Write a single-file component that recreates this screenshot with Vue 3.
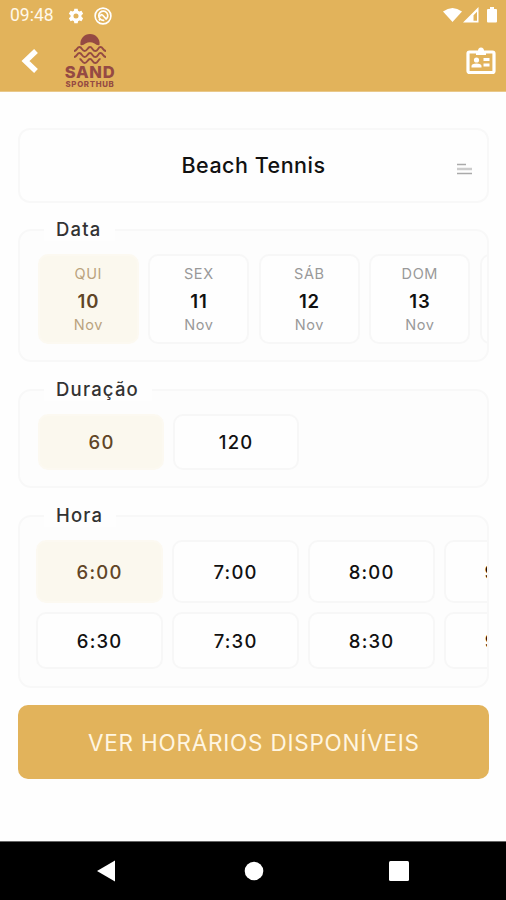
<script setup>
const days = [
  { week: 'QUI', day: '10', month: 'Nov', active: true },
  { week: 'SEX', day: '11', month: 'Nov' },
  { week: 'SÁB', day: '12', month: 'Nov' },
  { week: 'DOM', day: '13', month: 'Nov' },
]
const durations = ['60', '120']
const fullHours = ['6:00', '7:00', '8:00', '9:00']
const halfHours = ['6:30', '7:30', '8:30', '9:30']
</script>

<template>
  <div class="screen">
    <header class="top">
      <div class="status">
        <span class="clock">09:48</span>
        <svg class="gear" width="16" height="16" viewBox="0 0 24 24" fill="#fff">
          <path fill-rule="evenodd" d="M9.500 1h5l.6 3.200 2 1.200 3.100-1.100 2.500 4.300-2.500 2.100v2.600l2.500 2.100-2.500 4.300-3.100-1.100-2 1.200-.6 3.200h-5l-.6-3.200-2-1.200-3.100 1.100-2.500-4.300 2.500-2.100v-2.600L1.300 8.600l2.500-4.300 3.100 1.100 2-1.200zM12 8.200a3.800 3.800 0 1 0 0 7.600 3.800 3.800 0 0 0 0-7.600z" />
        </svg>
        <svg class="ring" width="18" height="18" viewBox="0 0 18 18" fill="none" stroke="#fff">
          <circle cx="9" cy="9" r="7.900" stroke-width="1.600" />
          <path d="M5 13.300L6.200 12A4.500 4.500 0 1 1 12 12.300M6.200 12Q8 13.800 10.300 13.200M8 7.500l4.500 4.800M6.500 9.500Q6.500 7.500 8 7.500" stroke-width="1.700" />
        </svg>
        <svg class="signals" width="56" height="18" viewBox="0 0 56 18">
          <path d="M0 4.500Q9.500-2.500 19 4.500L9.500 15z" fill="#fff" />
          <path fill-rule="evenodd" d="M20 15.500L35.500 0v15.500zM30.500 8.300v5.500h3.500V4.800z" fill="#fff" />
          <path d="M47 0h4v2h2q1 0 1 1v11.500q0 1-1 1h-8q-1 0-1-1V3q0-1 1-1h2z" fill="#fff" />
        </svg>
      </div>
      <div class="bar">
        <svg class="back" width="20" height="26" viewBox="0 0 20 26" fill="none" stroke="#fff" stroke-width="5.500">
          <path d="M16 3L5.500 13 16 23" />
        </svg>
        <div class="brand">
          <svg width="34" height="31" viewBox="0 0 34 31" fill="none" stroke="#954a43">
            <path d="M7.500 12A9.600 9.600 0 1 1 26.500 12Q24 12.600 21.500 10.500Q17 8 12.500 10.500Q10 12.600 7.500 12z" fill="#954a43" stroke="none" />
            <path
              d="M1 18C4 18 4 14 6.500 14S9 18 11.700 18 14.500 14 17 14 19.500 18 22.300 18 25 14 27.500 14 30 18 33 18M1 24C4 24 4 20 6.500 20S9 24 11.700 24 14.500 20 17 20 19.500 24 22.300 24 25 20 27.500 20 30 24 33 24M6.500 26C9 26 9 30 11.700 30S14.500 26 17 26 19.500 30 22.300 30 25 26 27.500 26"
              stroke-width="1.900"
            />
          </svg>
          <b class="sand">SAND</b>
          <b class="hub">SPORTHUB</b>
        </div>
        <svg class="badge" width="30" height="28" viewBox="0 0 30 28">
          <rect x="2" y="5" width="26" height="20.500" rx="1.500" fill="none" stroke="#fff" stroke-width="3.200" />
          <path d="M10 4h2q0-3.500 3-3.500T18 4h2v4H10z" fill="#fff" />
          <circle cx="10.500" cy="13" r="2.600" fill="#fff" />
          <path d="M5.500 20.500v-1.500q0-2.500 5-2.500t5 2.500v1.500zM17.500 11h6v3h-6zM17.500 16.500h6v3h-6z" fill="#fff" />
        </svg>
      </div>
    </header>

    <main>
      <div class="select">
        <span class="sport">Beach Tennis</span>
        <svg class="lines" width="15" height="12" viewBox="0 0 15 12">
          <path d="M0 1.500h9M0 10.500h15" stroke="#aaa" stroke-width="1.500" />
          <path d="M0 6h15" stroke="#ccc" stroke-width="2.500" />
        </svg>
      </div>

      <section class="group dates">
        <h2><span>Data</span></h2>
        <div class="row">
          <div v-for="d in days" :key="d.day" class="card day" :class="{ active: d.active }">
            <span class="small">{{ d.week }}</span>
            <span class="num">{{ d.day }}</span>
            <span class="small month">{{ d.month }}</span>
          </div>
          <div class="card day"></div>
        </div>
      </section>

      <section class="group lengths">
        <h2><span>Duração</span></h2>
        <div class="row">
          <div v-for="(d, i) in durations" :key="d" class="card slot" :class="{ active: i === 0 }">{{ d }}</div>
        </div>
      </section>

      <section class="group hours">
        <h2><span>Hora</span></h2>
        <div class="row full">
          <div v-for="(h, i) in fullHours" :key="h" class="card slot" :class="{ active: i === 0 }">{{ h }}</div>
        </div>
        <div class="row half">
          <div v-for="h in halfHours" :key="h" class="card slot">{{ h }}</div>
        </div>
      </section>

      <button class="cta">VER HORÁRIOS DISPONÍVEIS</button>
    </main>

    <nav>
      <svg width="18" height="22" viewBox="0 0 18 22"><path d="M0 11L18 0.500v21z" fill="#fff" /></svg>
      <svg class="home" width="20" height="20" viewBox="0 0 20 20"><circle cx="10" cy="10" r="9.300" fill="#fff" /></svg>
      <svg width="20" height="20" viewBox="0 0 20 20"><rect width="20" height="20" rx="1.500" fill="#fff" /></svg>
    </nav>
  </div>
</template>

<style>
body { margin: 0; background: #fefefe; }
</style>

<style scoped>
* { box-sizing: border-box; }
.screen {
  width: 506px;
  height: 900px;
  display: flex;
  flex-direction: column;
  background: #fefefe;
  font-family: Inter, "Liberation Sans", sans-serif;
  color: #111;
  overflow: hidden;
}
.top { height: 92px; flex: none; background: #e2b35b; border-bottom: 1px solid #e9c88a; }
.status { height: 31px; display: flex; align-items: center; padding: 0 6px 0 10px; }
.clock { width: 58px; font: 400 17.500px/31px Roboto, sans-serif; color: #fff8ea; }
.ring { margin-left: 10px; }
.signals { margin-left: auto; margin-right: 1px; }
.bar { height: 60px; display: flex; align-items: flex-start; padding: 0 10px 0 20px; }
.back { margin-top: 17px; }
.brand { width: 54px; margin-left: 23px; display: flex; flex-direction: column; align-items: center; color: #954a43; white-space: nowrap; }
.brand svg { margin-top: 2px; display: block; }
.sand { font-size: 16.500px; line-height: 17px; font-weight: 800; letter-spacing: 0.700px; }
.hub { font-size: 7.800px; line-height: 7px; font-weight: 800; letter-spacing: 0.700px; }
.badge { margin-left: auto; margin-top: 16px; }
main { flex: 1; padding: 36px 17px 0 18px; display: flex; flex-direction: column; }
.select {
  height: 75px;
  display: grid;
  grid-template-columns: 1fr auto 1fr;
  align-items: center;
  border: 2px solid #f8f8f8;
  border-radius: 12px;
}
.sport { grid-column: 2; font-size: 21.500px; font-weight: 500; letter-spacing: 0.500px; margin-top: -2px; }
.lines { justify-self: end; margin: 7px 15px 0 0; }
.group { border: 2px solid #f8f8f8; border-radius: 13px; background: #fdfdfd; }
h2 { margin: -14px 0 0 24px; height: 24px; display: flex; font-size: 18.500px; line-height: 24px; font-weight: 500; color: #333; }
h2 span { background: #fefefe; padding: 0 13px 0 12px; letter-spacing: 1.200px; }
.row { display: flex; overflow: hidden; }
.card { flex: none; border: 2px solid #f7f7f7; border-radius: 10px; background: #fefefe; }
.card.active { background: #fbf8ee; border-color: #fcf9f1; color: #604526; }
.dates { height: 133px; margin-top: 26px; }
.dates .row { gap: 9.500px; padding-left: 17.500px; margin-top: 13px; }
.day { width: 101px; height: 90px; display: flex; flex-direction: column; align-items: center; padding-top: 7px; }
.small { font-size: 14.500px; line-height: 21px; color: #999; letter-spacing: 0.600px; text-indent: 0.600px; }
.active .small { color: #baa37e; }
.num { font-size: 18.500px; line-height: 34px; font-weight: 600; letter-spacing: 0.800px; text-indent: 0.800px; }
.month { line-height: 14px; }
.lengths { height: 99px; margin-top: 27px; }
.lengths .row { gap: 8.500px; padding-left: 18px; margin-top: 13px; }
.slot { width: 127px; height: 56px; display: flex; align-items: center; justify-content: center; font-size: 18.500px; font-weight: 500; letter-spacing: 1.200px; text-indent: 1.200px; }
.lengths .slot { width: 126px; }
.hours { height: 173px; margin-top: 27px; }
.hours .row { gap: 9px; padding-left: 15.500px; }
.full { margin-top: 13px; }
.full .slot { height: 63px; }
.half { margin-top: 9px; }
.half .slot { height: 57px; }
.cta {
  height: 74px;
  margin-top: 17px;
  padding: 1px 0 0;
  border: 0;
  border-radius: 10px;
  background: #e2b35b;
  color: #fff6e2;
  font: 400 22.500px/73px Inter, sans-serif;
  letter-spacing: 0.780px;
  text-indent: 0.780px;
  white-space: nowrap;
}
nav { height: 59px; flex: none; background: #000; border-top: 1px solid #666; display: flex; align-items: center; justify-content: space-between; padding: 0 97px; }
.home { margin-left: 3px; }
</style>
